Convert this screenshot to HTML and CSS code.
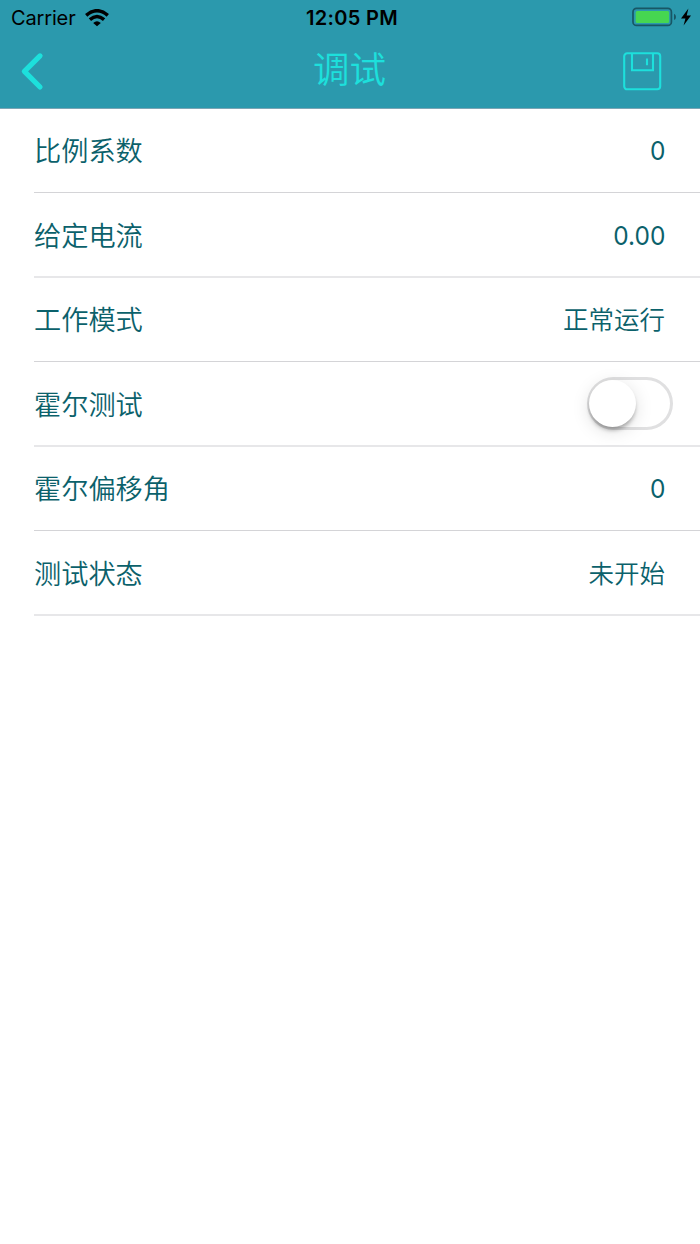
FILE: index.html
```
<!DOCTYPE html>
<html lang="zh-CN">
<head>
<meta charset="utf-8">
<title>调试</title>
<link rel="stylesheet" href="styles.css">
</head>
<body>
<header class="header">
  <div class="status">
    <div class="carrier"><span>Carrier</span>
      <svg class="wifi" width="24" height="18" viewBox="0 0 24 18"><g fill="none" stroke="#000" stroke-width="3.5"><path d="M1.2 6.3Q12 -2.9 22.8 6.3"/><path d="M4.9 10.6Q12 4.5 19.1 10.6"/></g><path d="M8.2 13.9Q12 10.6 15.8 13.9L12 17.3Z"/></svg>
    </div>
    <div class="time">12:05 PM</div>
    <div class="power">
      <svg width="61" height="20" viewBox="0 0 61 20"><rect x="1" y="0.4" width="38.4" height="17" rx="3.5" fill="none" stroke="#185665" stroke-width="1.7"/><rect x="3.7" y="3.1" width="33.4" height="11.8" rx="1.5" fill="#46d651"/><path d="M42 5.7Q44 6.7 44 8.9T42 12.1Z" fill="#185665"/><path d="M56.4 0.6L49 10.4H53.4L51.6 17.5L59 7.4H54.7Z"/></svg>
    </div>
  </div>
  <nav class="nav">
    <svg class="back" width="24" height="40" viewBox="0 0 24 40"><path d="M20 4.9L4.4 20.4L20 36" fill="none" stroke="#1de0dc" stroke-width="5.2" stroke-linecap="round" stroke-linejoin="round"/></svg>
    <h1 class="title">调试</h1>
    <svg class="save" width="40" height="40" viewBox="0 0 40 40"><g fill="none" stroke="#1de0dc" stroke-width="2.1"><rect x="2.2" y="2.3" width="36" height="36" rx="3"/><path d="M10 3V19.2H31V3M25 7.5V14.2"/></g></svg>
  </nav>
</header>
<main class="list">
  <div class="row"><span class="label">比例系数</span><span class="value number">0</span></div>
  <div class="row"><span class="label">给定电流</span><span class="value number">0.00</span></div>
  <div class="row"><span class="label">工作模式</span><span class="value">正常运行</span></div>
  <div class="row"><span class="label">霍尔测试</span><span class="switch"><span class="knob"></span></span></div>
  <div class="row"><span class="label">霍尔偏移角</span><span class="value number">0</span></div>
  <div class="row"><span class="label">测试状态</span><span class="value">未开始</span></div>
</main>
</body>
</html>
```

FILE: styles.css
```
* { box-sizing: border-box; }
body {
  margin: 0;
  min-height: 1244px;
  background: #fff;
  font-family: Inter, "Noto Sans CJK SC", sans-serif;
}
.header {
  height: 109px;
  background: #2b99ad;
  border-bottom: 1px solid #7ba5b4;
}
.status {
  height: 36px;
  display: grid;
  grid-template-columns: 1fr auto 1fr;
  align-items: center;
  padding: 0 7px 0 11px;
  font-size: 20px;
  color: #000;
}
.carrier { display: flex; align-items: center; gap: 9px; }
.carrier span { letter-spacing: -0.15px; }
.time { font-weight: 600; font-size: 20px; letter-spacing: 0.3px; }
.power { display: flex; justify-content: flex-end; }
.power svg, .wifi { display: block; }
.power svg { overflow: visible; }
.nav {
  height: 72px;
  display: grid;
  grid-template-columns: 1fr auto 1fr;
  padding: 0 38px 0 20px;
}
.back { margin-top: 15px; }
.save { margin-top: 15px; justify-self: end; }
.title {
  margin: 6px 0 0 17px;
  height: 52px;
  line-height: 52px;
  font-family: "Noto Sans CJK SC", sans-serif;
  font-size: 36.5px;
  font-weight: 350;
  color: #1de0dc;
}
.list { padding-left: 34px; color: #0b616b; }
.row {
  display: flex;
  justify-content: space-between;
  align-items: center;
  height: 84px;
  padding-right: 35px;
  border-bottom: 1px solid #d4d4d7;
}
.row:nth-child(even) {
  height: 85px;
  border-bottom: 2px solid #e7e7e9;
}
.label { font-size: 27.2px; line-height: 40px; font-weight: 350; padding-top: 2px; }
.value { font-size: 25.5px; line-height: 40px; font-weight: 350; padding-top: 1px; }
.row:nth-child(even) .label { padding-top: 4px; }
.row:nth-child(even) .value { padding-top: 3px; }
.number {
  font-size: 26px;
  font-weight: 400;
  transform: scaleX(.94);
  transform-origin: right center;
}
.switch {
  width: 86px;
  height: 53px;
  margin-right: -8px;
  padding: 3px 2px;
  border-radius: 27px;
  background: #fff;
  box-shadow: inset 0 0 0 3px #e0e0e1;
}
.knob {
  display: block;
  width: 47px;
  height: 47px;
  border-radius: 50%;
  background: #fff;
  box-shadow: 0 4px 4px -1px rgba(0, 0, 0, .3), 0 4px 18px rgba(0, 0, 0, .13);
}
```
